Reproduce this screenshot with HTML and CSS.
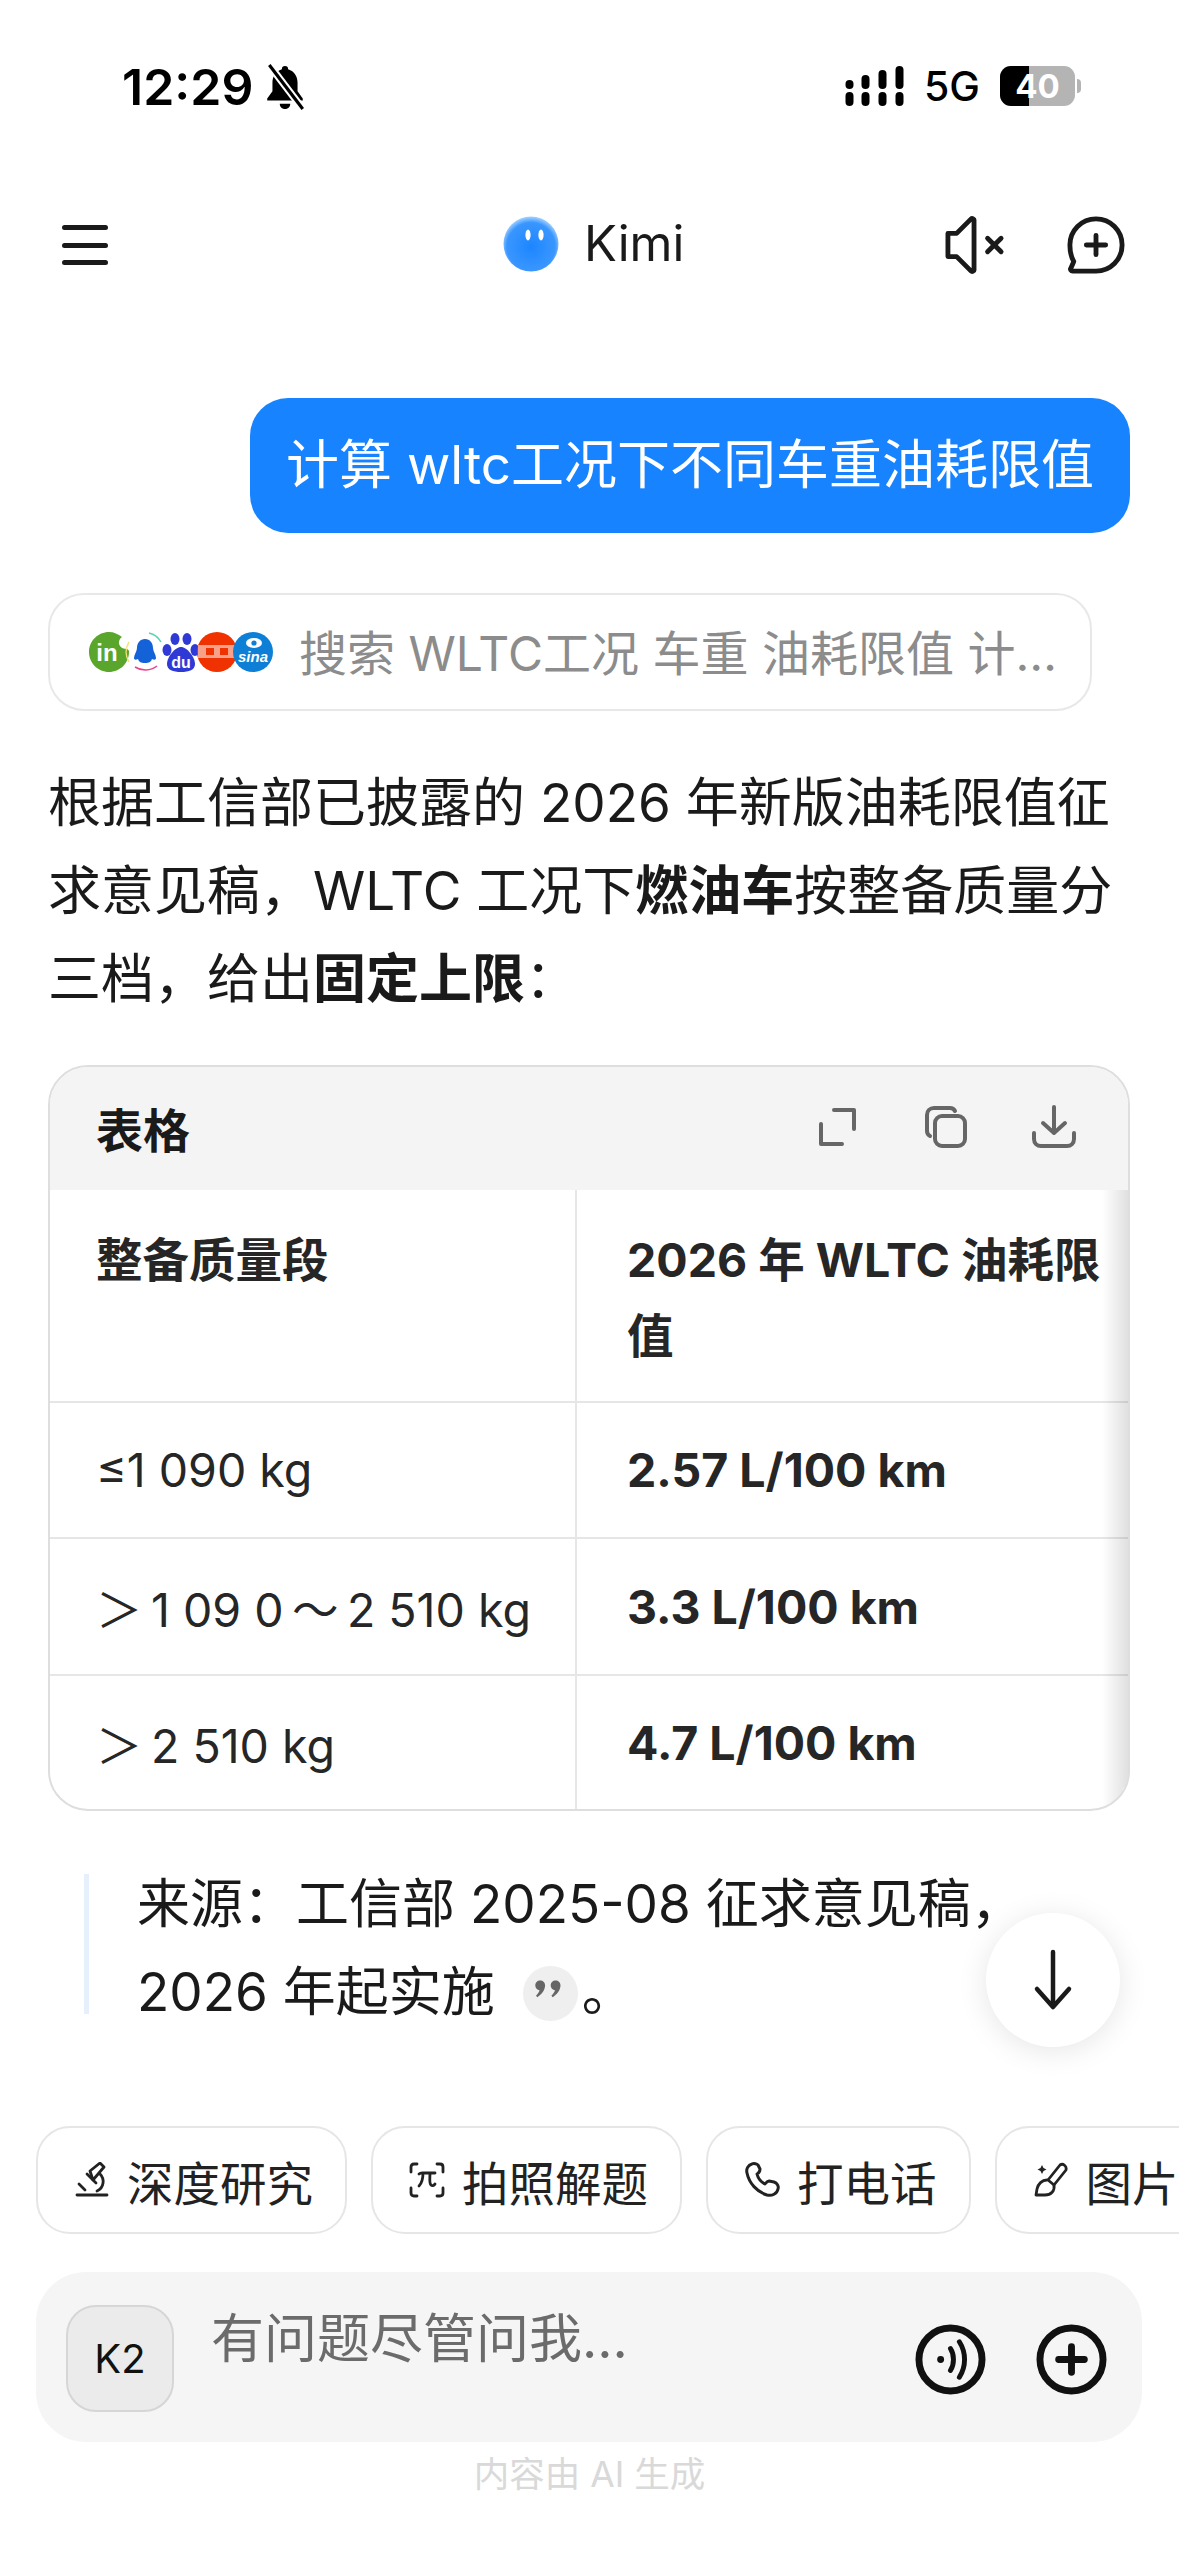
FILE: index.html
```html
<!DOCTYPE html>
<html lang="zh-CN">

<head>
    <meta charset="UTF-8">
    <meta name="viewport" content="width=device-width, initial-scale=1.0">
    <link rel="stylesheet" href="styles.css">
</head>

<body>
    <div class="status-bar">
        <div class="status-left">
            <span class="time">12:29</span>
            <svg class="bell" viewBox="0 0 40 44">
                <path d="M20 2c-2 0-3 1-3 3-6 2-9 7-9 13v8l-5 7v2h34v-2l-5-7v-8c0-6-3-11-9-13 0-2-1-3-3-3z" fill="#000"/>
                <path d="M15 38h10c0 3-2 5-5 5s-5-2-5-5z" fill="#000"/>
                <path d="M5 1l32 42" stroke="#fff" stroke-width="7"/>
                <path d="M5 1l32 42" stroke="#000" stroke-width="3"/>
            </svg>
        </div>
        <div class="status-right">
            <svg class="signal" viewBox="0 0 58 40" fill="#000">
                <rect x="0" y="26" width="8" height="14" rx="4"/>
                <rect x="0" y="14" width="8" height="9" rx="4"/>
                <rect x="16" y="26" width="8" height="14" rx="4"/>
                <rect x="16" y="9" width="8" height="14" rx="4"/>
                <rect x="33" y="26" width="8" height="14" rx="4"/>
                <rect x="33" y="4" width="8" height="19" rx="4"/>
                <rect x="50" y="26" width="8" height="14" rx="4"/>
                <rect x="50" y="0" width="8" height="23" rx="4"/>
            </svg>
            <span class="net">5G</span>
            <div class="battery">
                <div class="battery-fill"></div>
                <span class="battery-num">40</span>
            </div>
            <div class="battery-tip"></div>
        </div>
    </div>

    <div class="header">
        <svg class="menu-icon" viewBox="0 0 46 40" fill="#1a1a1a">
            <rect x="0" y="0" width="46" height="5" rx="2.5"/>
            <rect x="0" y="18" width="46" height="5" rx="2.5"/>
            <rect x="0" y="35" width="46" height="5" rx="2.5"/>
        </svg>
        <div class="brand">
            <svg class="brand-logo" viewBox="0 0 56 56">
                <defs>
                    <radialGradient id="ball" cx="50%" cy="55%" r="55%">
                        <stop offset="0%" stop-color="#1c86ff"/>
                        <stop offset="80%" stop-color="#3a96ff"/>
                        <stop offset="100%" stop-color="#a6d4ff"/>
                    </radialGradient>
                </defs>
                <circle cx="28" cy="28" r="27.5" fill="url(#ball)"/>
                <ellipse cx="25" cy="19" rx="2.6" ry="5.4" fill="#fff"/>
                <ellipse cx="38" cy="19" rx="2.6" ry="5.4" fill="#fff"/>
            </svg>
            <span class="brand-name">Kimi</span>
        </div>
        <div class="header-actions">
            <svg class="mute-icon" viewBox="0 0 62 60" fill="none" stroke="#1a1a1a" stroke-width="5" stroke-linejoin="round" stroke-linecap="round">
                <path d="M27 3L12 18H3v24h9l15 15c1 1 3 0 3-1V4c0-1-2-2-3-1z"/>
                <path d="M44 23l14 14M58 23L44 37"/>
            </svg>
            <svg class="chat-icon" viewBox="0 0 60 60" fill="none" stroke="#1a1a1a" stroke-width="5" stroke-linecap="round" stroke-linejoin="round">
                <path d="M30 3c15 0 27 12 27 27S45 57 30 57H6c-2 0-3-2-2-3l3-7C4 42 3 36 3 30 3 15 15 3 30 3z"/>
                <path d="M30 20v20M20 30h20"/>
            </svg>
        </div>
    </div>

    <div class="chat">
        <div class="user-row">
            <div class="user-bubble">计算 wltc工况下不同车重油耗限值</div>
        </div>

        <div class="search-pill">
            <div class="site-icons">
                <svg class="site" viewBox="0 0 40 40"><path d="M20 0c5 0 9 2 13 5-3 2-4 6-2 9 1 2 4 3 7 3 2 1 2 2 2 3 0 11-9 20-20 20S0 31 0 20 9 0 20 0z" fill="#5aa62c"/><text x="18" y="29" class="site-text" font-size="24">in</text></svg>
                <svg class="site" viewBox="0 0 40 40"><path d="M4 10a19 19 0 0 0 0 20" fill="none" stroke="#f2e27a" stroke-width="1.5"/><path d="M24 1a19 19 0 0 1 12 9" fill="none" stroke="#56d6b0" stroke-width="1.5"/><path d="M10 35a19 19 0 0 0 22-1" fill="none" stroke="#e8458f" stroke-width="1.5"/><path d="M20 7c5 0 8 4 8 9 0 3 3 7 3 10 0 2-2 2-4 1-1 3-3 4-7 4s-6-1-7-4c-2 1-4 1-4-1 0-3 3-7 3-10 0-5 3-9 8-9z" fill="#1462d8"/></svg>
                <svg class="site" viewBox="0 0 40 40" fill="#2f3ad6"><ellipse cx="6" cy="18" rx="4.500" ry="6"/><ellipse cx="14" cy="7" rx="4.500" ry="6"/><ellipse cx="26" cy="7" rx="4.500" ry="6"/><ellipse cx="34" cy="18" rx="4.500" ry="6"/><path d="M20 15c6 0 14 10 14 17 0 6-6 8-14 8s-14-2-14-8c0-7 8-17 14-17z"/><text x="20" y="36" class="site-text" font-size="16">du</text></svg>
                <svg class="site" viewBox="0 0 40 40"><circle cx="20" cy="20" r="20" fill="#f03200"/><rect x="1" y="13" width="38" height="13" fill="#f7a08a"/><rect x="9" y="16" width="8" height="7" fill="#f03200"/><rect x="23" y="16" width="8" height="7" fill="#f03200"/></svg>
                <svg class="site" viewBox="0 0 40 40"><circle cx="20" cy="20" r="20" fill="#0e7fd6"/><ellipse cx="21" cy="11" rx="8" ry="5" fill="#fff"/><circle cx="21" cy="11" r="2.600" fill="#0e7fd6"/><text x="20" y="30" class="site-text site-italic" font-size="15">sina</text></svg>
            </div>
            <span class="search-text">搜索 WLTC工况 车重 油耗限值 计…</span>
        </div>

        <p class="answer">根据工信部已披露的 2026 年新版油耗限值征求意见稿，WLTC 工况下<b>燃油车</b>按整备质量分三档，给出<b>固定上限</b>：</p>

        <div class="table-card">
            <div class="table-head">
                <span class="table-title">表格</span>
                <div class="table-tools">
                    <svg class="tool" viewBox="0 0 44 44" fill="none" stroke="#666" stroke-width="4" stroke-linecap="round" stroke-linejoin="round">
                        <path d="M18 5h20v19M5 19v20h21"/>
                    </svg>
                    <svg class="tool" viewBox="0 0 44 44" fill="none" stroke="#666" stroke-width="4" stroke-linecap="round" stroke-linejoin="round">
                        <path d="M6 31c-2-1-3-3-3-5V10c0-4 3-7 7-7h16c2 0 4 1 5 3"/>
                        <rect x="11" y="11" width="30" height="30" rx="7"/>
                    </svg>
                    <svg class="tool" viewBox="0 0 44 44" fill="none" stroke="#666" stroke-width="4" stroke-linecap="round" stroke-linejoin="round">
                        <path d="M22 2v26M11 18l11 10 11-10"/>
                        <path d="M2 28v6c0 4 3 7 7 7h26c4 0 7-3 7-7v-6"/>
                    </svg>
                </div>
            </div>
            <div class="grid">
                <div class="cell cell-top cell-left"><b>整备质量段</b></div>
                <div class="cell cell-top"><b>2026 年 WLTC 油耗限值</b></div>
                <div class="cell cell-left">≤1 090 kg</div>
                <div class="cell"><b>2.57 L/100 km</b></div>
                <div class="cell cell-left">＞&#8201;1 09 0&#8201;～&#8201;2 510 kg</div>
                <div class="cell"><b>3.3 L/100 km</b></div>
                <div class="cell cell-left">＞&#8201;2 510 kg</div>
                <div class="cell"><b>4.7 L/100 km</b></div>
            </div>
            <div class="table-fade"></div>
        </div>

        <blockquote class="note">来源：工信部 2025-08 征求意见稿，<br>2026 年起实施<span class="cite"><svg viewBox="0 0 24 20" fill="#666"><path d="M5 1c2 0 3.500 1.500 3.500 3.500C8.500 8 6 11 3 13l-1-1c1-1 2.500-3 2.500-4C3 8 1.500 6.500 1.500 4.500S3 1 5 1zM16 1c2 0 3.500 1.500 3.500 3.500 0 3.500-2.500 6.500-5.500 8.500l-1-1c1-1 2.500-3 2.500-4-1.500 0-3-1.500-3-3.500S14 1 16 1z"/></svg></span>。</blockquote>
    </div>

    <button class="scroll-btn">
        <svg viewBox="0 0 40 62" fill="none" stroke="#1a1a1a" stroke-width="4.500" stroke-linecap="round" stroke-linejoin="round">
            <path d="M20 3v55M4 40l16 18 16-18"/>
        </svg>
    </button>

    <div class="chips">
        <div class="chip">
            <svg class="chip-icon" viewBox="0 0 32 36" fill="none" stroke="#222" stroke-width="2.800" stroke-linecap="round" stroke-linejoin="round">
                <path d="M1 33h30"/>
                <path d="M14 9l10-8 4 4-11 13z"/>
                <path d="M11 12l9 9"/>
                <path d="M24 12c5 5 4 14-3 17"/>
                <path d="M3 22l6 6"/>
            </svg>
            深度研究
        </div>
        <div class="chip">
            <svg class="chip-icon" viewBox="0 0 36 36" fill="none" stroke="#222" stroke-width="2.800" stroke-linecap="round" stroke-linejoin="round">
                <path d="M8 2H5C3 2 2 3 2 5v5M28 2h3c2 0 3 1 3 3v5M8 34H5c-2 0-3-1-3-3v-5M28 34h3c2 0 3-1 3-3v-5"/>
                <path d="M10 12c2-2 4-1 6-1h10M14 11c0 5-1 10-4 13M21 11c0 5-1 10 1 12 1 1 3 1 4-1"/>
            </svg>
            拍照解题
        </div>
        <div class="chip">
            <svg class="chip-icon" viewBox="0 0 36 36" fill="none" stroke="#222" stroke-width="3" stroke-linecap="round" stroke-linejoin="round">
                <path d="M8 2c-4 1-6 5-5 9 2 10 10 19 20 22 5 1 10-1 11-6 1-3-1-6-4-7l-5-1c-2 0-3 2-4 3-4-2-7-6-8-10 2-1 3-3 3-5l-2-4c-1-1-4-2-6-1z"/>
            </svg>
            打电话
        </div>
        <div class="chip">
            <svg class="chip-icon" viewBox="0 0 36 36" fill="none" stroke="#222" stroke-width="2.800" stroke-linecap="round" stroke-linejoin="round">
                <path d="M27 3c3-2 7 1 6 5L21 23l-6-5z"/>
                <path d="M14 18c-5 0-9 4-10 9l-1 6h9c6 0 10-4 9-10"/>
                <path d="M9 3l1.500 3 3 1.500-3 1.500L9 12l-1.500-3-3-1.500 3-1.500z" fill="#222" stroke="none"/>
            </svg>
            图片
        </div>
    </div>

    <div class="input-box">
        <div class="model-btn">K2</div>
        <div class="placeholder">有问题尽管问我...</div>
        <div class="input-actions">
            <svg class="round-icon" viewBox="0 0 72 72" fill="none" stroke="#111" stroke-width="7" stroke-linecap="round">
                <circle cx="36" cy="36" r="32"/>
                <circle cx="26" cy="36" r="3.500" fill="#111" stroke="none"/>
                <path d="M36 25c4 6 4 16 0 22" stroke-width="5"/>
                <path d="M45 18c7 11 7 25 0 36" stroke-width="5"/>
            </svg>
            <svg class="round-icon" viewBox="0 0 72 72" fill="none" stroke="#111" stroke-width="7" stroke-linecap="round">
                <circle cx="36" cy="36" r="32"/>
                <path d="M36 23v26M23 36h26"/>
            </svg>
        </div>
    </div>

    <div class="disclaimer">内容由 AI 生成</div>
</body>

</html>
```

FILE: styles.css
```css
body {
    font-family: 'Inter', 'Noto Sans CJK SC', sans-serif;
    background-color: #fff;
    color: #1a1a1a;
    width: 1179px;
    height: 2556px;
    margin: 0;
    overflow: hidden;
    position: relative;
}

/* status bar */
.status-bar {
    height: 196px;
    padding: 60px 98px 0 122px;
    box-sizing: border-box;
    display: flex;
    justify-content: space-between;
    align-items: flex-start;
}

.status-left {
    display: flex;
    align-items: center;
    gap: 10px;
    height: 54px;
}

.time {
    font-size: 50px;
    font-weight: 600;
    color: #000;
}

.bell {
    width: 44px;
    height: 46px;
}

.status-right {
    display: flex;
    align-items: center;
    height: 54px;
    margin-top: -1px;
}

.signal {
    width: 59px;
    height: 40px;
}

.net {
    font-size: 41px;
    font-weight: 500;
    color: #000;
    margin-left: 20px;
}

.battery {
    width: 75px;
    height: 40px;
    margin-left: 20px;
    border-radius: 11px;
    background-color: #b4b4b4;
    position: relative;
    overflow: hidden;
}

.battery-fill {
    width: 29px;
    height: 100%;
    background-color: #000;
}

.battery-num {
    position: absolute;
    top: 0;
    left: 0;
    width: 100%;
    text-align: center;
    font-size: 33px;
    line-height: 40px;
    font-weight: 700;
    color: #fff;
}

.battery-tip {
    width: 4px;
    height: 14px;
    margin-left: 2px;
    border-radius: 0 4px 4px 0;
    background-color: #b4b4b4;
}

/* header */
.header {
    height: 98px;
    padding: 0 54px 0 62px;
    display: flex;
    align-items: center;
    justify-content: space-between;
    position: relative;
}

.menu-icon {
    width: 46px;
    height: 40px;
}

.brand {
    position: absolute;
    left: 503px;
    top: 20px;
    display: flex;
    align-items: center;
    gap: 25px;
}

.brand-logo {
    width: 56px;
    height: 56px;
}

.brand-name {
    font-size: 49px;
    line-height: 56px;
    color: #1a1a1a;
}

.header-actions {
    display: flex;
    align-items: center;
    gap: 62px;
}

.mute-icon {
    width: 60px;
    height: 58px;
}

.chat-icon {
    width: 58px;
    height: 58px;
}

/* chat */
.chat {
    padding: 104px 49px 0 48px;
}

.user-row {
    display: flex;
    justify-content: flex-end;
}

.user-bubble {
    background-color: #1783ff;
    color: #fff;
    font-size: 53px;
    height: 135px;
    line-height: 135px;
    padding: 0 36px;
    border-radius: 38px;
    white-space: nowrap;
    width: 808px;
}

.search-pill {
    width: 1044px;
    height: 118px;
    margin-top: 60px;
    border: 2px solid #e8e8e8;
    border-radius: 36px;
    box-sizing: border-box;
    padding: 0 0 4px 39px;
    display: flex;
    align-items: center;
    gap: 26px;
}

.site-icons {
    display: flex;
    padding-top: 4px;
}

.site {
    width: 40px;
    height: 40px;
    flex-shrink: 0;
    margin-right: -4px;
}

.site-icons .site:last-child {
    margin-right: 0;
}

.site-text {
    fill: #fff;
    font-family: 'Liberation Sans', sans-serif;
    font-weight: 700;
    text-anchor: middle;
}

.site-italic {
    font-style: italic;
}

.search-text {
    font-size: 48px;
    color: #8c8c8c;
    white-space: nowrap;
}

.answer {
    font-size: 53px;
    line-height: 88px;
    margin: 48px 0 0 0;
    width: 1082px;
    color: #1a1a1a;
}

.answer b {
    font-weight: 700;
}

/* table */
.table-card {
    margin-top: 42px;
    width: 1082px;
    border: 2px solid #dedede;
    border-radius: 40px;
    box-sizing: border-box;
    overflow: hidden;
    position: relative;
}

.table-head {
    height: 123px;
    background-color: #f4f4f4;
    padding: 0 52px 3px 46px;
    box-sizing: border-box;
    display: flex;
    align-items: center;
    justify-content: space-between;
}

.table-title {
    font-size: 47px;
    font-weight: 700;
}

.table-tools {
    display: flex;
    gap: 64px;
}

.tool {
    width: 44px;
    height: 44px;
}

.grid {
    display: grid;
    grid-template-columns: 527px 1fr;
    grid-template-rows: 211px 136px 137px 135px;
    font-size: 46.5px;
}

.cell {
    padding: 0 20px 0 50px;
    display: flex;
    align-items: center;
    border-top: 2px solid #e6e6e6;
    box-sizing: border-box;
    white-space: nowrap;
    color: #262626;
}

.cell:nth-child(-n+2) {
    border-top: none;
}

.cell-left {
    border-right: 2px solid #e6e6e6;
    padding-left: 46px;
}

.cell-top {
    align-items: flex-start;
    padding-top: 32px;
    line-height: 76px;
    white-space: normal;
}

.cell b {
    font-weight: 700;
}

.table-fade {
    position: absolute;
    top: 123px;
    right: 0;
    bottom: 0;
    width: 26px;
    background: linear-gradient(to right, rgba(0, 0, 0, 0), rgba(0, 0, 0, 0.12));
}

/* quote */
.note {
    margin: 49px 0 0 36px;
    padding-left: 53px;
    font-size: 53px;
    line-height: 88px;
    height: 176px;
    box-sizing: border-box;
    color: #1a1a1a;
    position: relative;
}

.note::before {
    content: "";
    position: absolute;
    left: 0;
    top: 14px;
    bottom: 22px;
    width: 5px;
    background-color: #e5f0fc;
}

.cite {
    display: inline-flex;
    align-items: center;
    justify-content: center;
    width: 55px;
    height: 55px;
    margin: 0 4px 0 28px;
    border-radius: 50%;
    background-color: #efefef;
    vertical-align: -10px;
    position: relative;
    top: -14px;
}

.cite svg {
    width: 34px;
    height: 28px;
}

.scroll-btn {
    position: absolute;
    left: 986px;
    top: 1913px;
    width: 134px;
    height: 134px;
    border: none;
    border-radius: 50%;
    background-color: #fff;
    box-shadow: 0 4px 30px rgba(0, 0, 0, 0.1);
    display: flex;
    align-items: center;
    justify-content: center;
}

.scroll-btn svg {
    width: 40px;
    height: 62px;
}

/* chips */
.chips {
    position: absolute;
    top: 2126px;
    left: 36px;
    display: flex;
    gap: 24px;
}

.chip {
    height: 108px;
    padding: 0 32px 0 36px;
    border: 2px solid #e6e6e6;
    border-radius: 34px;
    box-sizing: border-box;
    display: flex;
    align-items: center;
    gap: 17px;
    font-size: 46.5px;
    white-space: nowrap;
    color: #222;
}

.chip-icon {
    width: 36px;
    height: 36px;
}

/* input */
.input-box {
    position: absolute;
    top: 2272px;
    left: 36px;
    width: 1106px;
    height: 170px;
    border-radius: 50px;
    background-color: #f5f5f5;
    display: flex;
    align-items: flex-start;
    padding: 33px 35px 0 30px;
    box-sizing: border-box;
}

.model-btn {
    width: 108px;
    height: 107px;
    border: 2px solid #d6d6d6;
    border-radius: 30px;
    background-color: #ebebeb;
    box-sizing: border-box;
    font-size: 40px;
    line-height: 103px;
    text-align: center;
    color: #111;
    flex-shrink: 0;
}

.placeholder {
    font-size: 53px;
    line-height: 68px;
    color: #6b6b6b;
    margin-left: 37px;
    flex: 1;
}

.input-actions {
    display: flex;
    gap: 50px;
    margin-top: 19px;
}

.round-icon {
    width: 71px;
    height: 71px;
}

.disclaimer {
    position: absolute;
    top: 2450px;
    left: 0;
    width: 100%;
    text-align: center;
    font-size: 35.5px;
    line-height: 50px;
    color: #d9d9d9;
}
```
